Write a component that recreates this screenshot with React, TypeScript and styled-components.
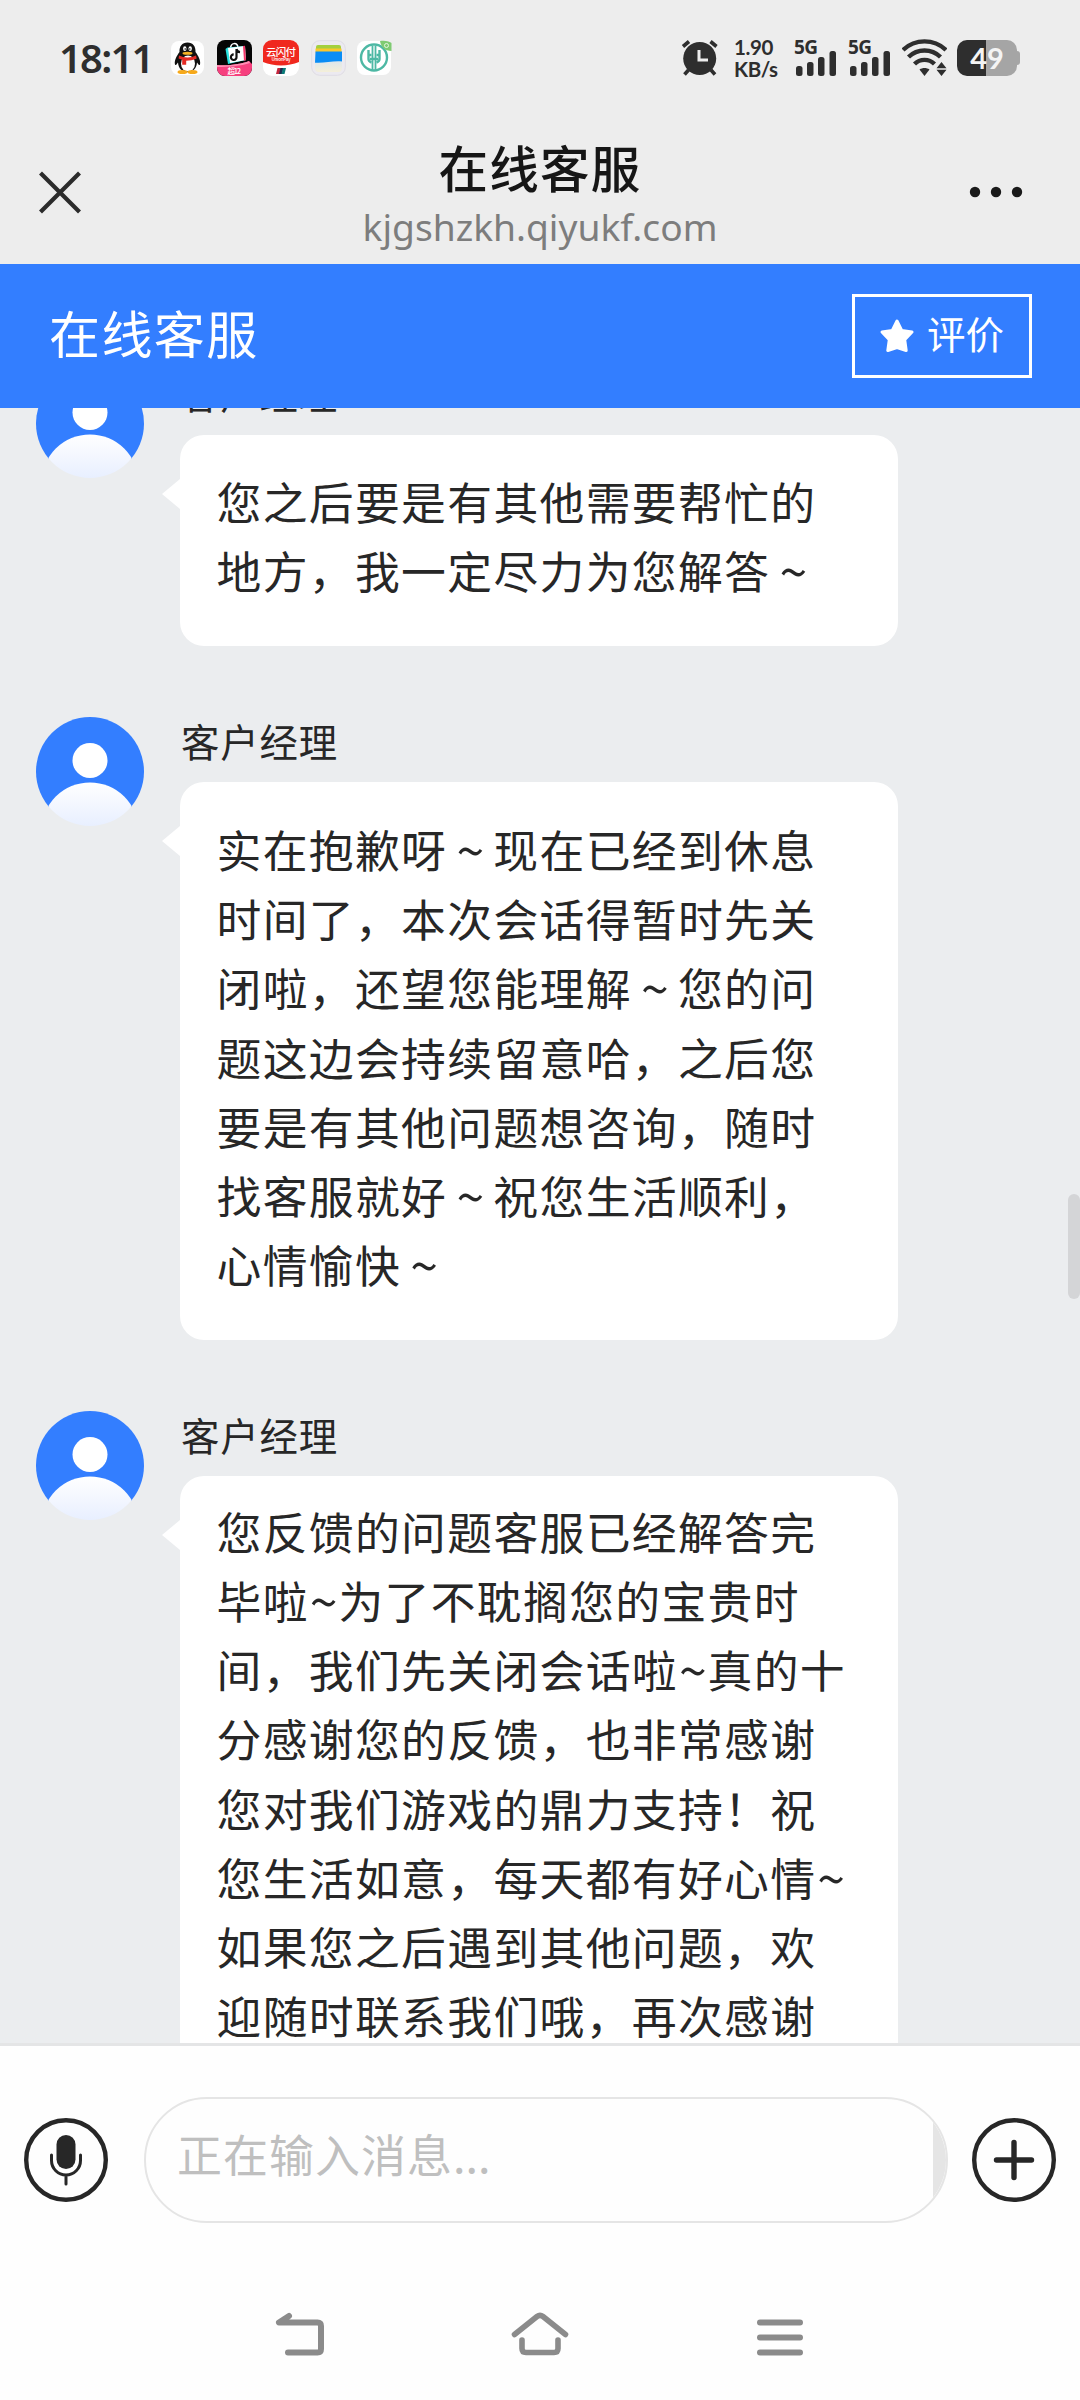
import React from 'react';
import styled, { createGlobalStyle } from 'styled-components';

const Global = createGlobalStyle`
  *, *::before, *::after { box-sizing: border-box; }
  html, body { margin: 0; padding: 0; background: #fff; }
`;

const cjk = `"Noto Sans CJK SC", "Noto Sans", sans-serif`;
const latin = `"Noto Sans", "Noto Sans CJK SC", sans-serif`;

const Screen = styled.div`
  width: 1080px;
  height: 2400px;
  display: flex;
  flex-direction: column;
  overflow: hidden;
  background: #fefefe;
  font-family: ${cjk};
  color: #272727;
`;

const StatusBar = styled.div`
  height: 116px;
  flex: none;
  display: flex;
  align-items: center;
  justify-content: space-between;
  padding: 0 63px 0 59px;
  background: #ededed;
  color: #2e2e2e;
`;

const StatusGroup = styled.div`
  display: flex;
  align-items: center;
`;

const Clock = styled.div`
  width: 111px;
  font: 600 40px/54px ${latin};
  letter-spacing: -1.8px;
  white-space: nowrap;
`;

const AppIcons = styled.div`
  display: flex;
  gap: 11.5px;
  svg { display: block; }
`;

const NetSpeed = styled.div`
  width: 50px;
  margin-left: 15px;
  font: 700 20.5px/22px Lato, ${latin};
  letter-spacing: -0.4px;
  white-space: nowrap;
`;

const Signal = styled.div<{ $gap: number }>`
  position: relative;
  width: 43px;
  height: 38px;
  margin-left: ${p => p.$gap}px;
  svg { display: block; }
`;

const SignalTag = styled.span`
  position: absolute;
  left: 0;
  top: 0;
  font: 700 19px/17px ${latin};
  letter-spacing: -0.5px;
`;

const Battery = styled.div`
  position: relative;
  width: 60px;
  height: 36px;
  margin-left: 10px;
  border-radius: 10px;
  display: flex;
  align-items: center;
  justify-content: center;
  background: linear-gradient(90deg, #2e2e2e 0 29px, #a5a5a5 29px);
  color: #f4f4f4;
  font: 700 29px/36px Lato, ${latin};
  &::after {
    content: '';
    position: absolute;
    right: -3px;
    top: 11px;
    width: 3px;
    height: 14px;
    border-radius: 0 3px 3px 0;
    background: #a5a5a5;
  }
`;

const TitleBar = styled.header`
  height: 148px;
  flex: none;
  display: grid;
  grid-template-columns: 120px 1fr 120px;
  background: #ededed;
`;

const TitleSlot = styled.div<{ $inset?: number }>`
  display: flex;
  justify-content: center;
  padding: 51px ${p => p.$inset ?? 0}px 0 0;
`;

const Titles = styled.div`
  display: flex;
  flex-direction: column;
  align-items: center;
  padding-top: 20px;
`;

const PageTitle = styled.h1`
  margin: 0;
  font: 500 49.5px/62px ${cjk};
  letter-spacing: 1.2px;
  color: #161616;
`;

const PageHost = styled.div`
  margin-top: 6px;
  font: 400 37.2px/46px ${latin};
  color: #7d7d7d;
`;

const ServiceBar = styled.div`
  height: 144px;
  flex: none;
  display: flex;
  align-items: center;
  justify-content: space-between;
  padding: 0 48px 0 49px;
  background: #337eff;
  color: #fff;
`;

const ServiceName = styled.div`
  padding-bottom: 9px;
  font-size: 51px;
  line-height: 72px;
  letter-spacing: 1.4px;
`;

const RateButton = styled.button`
  width: 180px;
  height: 84px;
  padding: 0;
  display: flex;
  align-items: center;
  justify-content: center;
  gap: 12px;
  border: 3px solid #fff;
  background: transparent;
  color: #fff;
  font: 400 38.5px/50px ${cjk};
`;

const RateText = styled.span`
  padding: 0 1px 8px 0;
`;

const ChatWrap = styled.main`
  position: relative;
  height: 1635px;
  flex: none;
  overflow: hidden;
  background: #ebedef;
`;

const ChatList = styled.div`
  margin-top: -39px;
  display: flex;
  flex-direction: column;
  gap: 71px;
`;

const Message = styled.section`
  display: flex;
  align-items: flex-start;
  gap: 36px;
  padding-left: 36px;
`;

const MessageBody = styled.div`
  width: 717.5px;
`;

const Sender = styled.div`
  height: 65.5px;
  padding-left: 1px;
  font-size: 38.4px;
  line-height: 46px;
  letter-spacing: 0.9px;
`;

const Bubble = styled.div<{ $top: number; $bottom: number }>`
  position: relative;
  padding: ${p => p.$top}px 0 ${p => p.$bottom}px 36.5px;
  border-radius: 24px;
  background: #fff;
  font-size: 44.8px;
  line-height: 69.2px;
  letter-spacing: 1.35px;
  &::before {
    content: '';
    position: absolute;
    left: -18px;
    top: 44px;
    border: solid transparent;
    border-width: 15.5px 18px 15.5px 0;
    border-right-color: #fff;
  }
`;

const Line = styled.div`
  white-space: nowrap;
`;

const Tilde = styled.span<{ $wide?: boolean }>`
  display: inline-block;
  width: ${p => (p.$wide ? 46.1 : 29.6)}px;
  height: 69.2px;
  vertical-align: top;
  font-size: 50px;
  letter-spacing: 0;
  text-align: center;
`;

const ScrollThumb = styled.div`
  position: absolute;
  right: 0;
  top: 786px;
  width: 12px;
  height: 105px;
  border-radius: 6px;
  background: #d4d5d7;
`;

const Composer = styled.footer`
  height: 231px;
  flex: none;
  display: flex;
  align-items: center;
  padding: 0 24px;
  border-top: 3px solid #e4e5e6;
  background: #fefefe;
`;

const RoundButton = styled.button`
  width: 84px;
  height: 84px;
  padding: 0;
  border: 0;
  background: none;
  svg { display: block; }
`;

const InputBox = styled.div`
  width: 804px;
  height: 126px;
  margin: 0 24px 0 36px;
  display: flex;
  justify-content: space-between;
  border: 2.5px solid #e5e5e5;
  border-radius: 63px;
  overflow: hidden;
`;

const Placeholder = styled.div`
  padding-left: 31px;
  font-size: 45px;
  line-height: 109px;
  letter-spacing: 1px;
  color: #bfbfbf;
`;

const Ellipsis = styled.span`
  letter-spacing: 0;
`;

const InputEdge = styled.div`
  width: 13px;
  background: #e5e5e5;
`;

const NavBar = styled.nav`
  flex: 1;
  display: flex;
  justify-content: space-between;
  padding: 34px 270px 0;
  svg { display: block; }
`;

const IconText = styled.text`
  font-family: ${cjk};
  font-weight: 500;
`;

const messages = [
  { top: 31.5, bottom: 41.5, lines: ['您之后要是有其他需要帮忙的', '地方，我一定尽力为您解答～'] },
  {
    top: 31.5,
    bottom: 41.5,
    lines: [
      '实在抱歉呀～现在已经到休息',
      '时间了，本次会话得暂时先关',
      '闭啦，还望您能理解～您的问',
      '题这边会持续留意哈，之后您',
      '要是有其他问题想咨询，随时',
      '找客服就好～祝您生活顺利，',
      '心情愉快～',
    ],
  },
  {
    top: 19.5,
    bottom: 40,
    lines: [
      '您反馈的问题客服已经解答完',
      '毕啦~为了不耽搁您的宝贵时',
      '间，我们先关闭会话啦~真的十',
      '分感谢您的反馈，也非常感谢',
      '您对我们游戏的鼎力支持！祝',
      '您生活如意，每天都有好心情~',
      '如果您之后遇到其他问题，欢',
      '迎随时联系我们哦，再次感谢',
    ],
  },
];

function ChatLine({ text }: { text: string }) {
  return (
    <Line>
      {text.split(/([~～])/).map((part, i) =>
        part === '~' || part === '～' ? (
          <Tilde key={i} $wide={part === '～'}>~</Tilde>
        ) : (
          part
        ),
      )}
    </Line>
  );
}

function Avatar({ id }: { id: string }) {
  return (
    <svg width="108" height="109" viewBox="0 0 108 109">
      <defs>
        <clipPath id={`clip${id}`}>
          <ellipse cx="54" cy="54.5" rx="54" ry="54.5" />
        </clipPath>
        <linearGradient id={`body${id}`} x1="0" y1="65" x2="0" y2="109" gradientUnits="userSpaceOnUse">
          <stop offset="0" stopColor="#fff" />
          <stop offset="1" stopColor="#e8efff" />
        </linearGradient>
      </defs>
      <g clipPath={`url(#clip${id})`}>
        <rect width="108" height="90" fill="#337eff" />
        <circle cx="54" cy="43.5" r="17.5" fill="#fff" />
        <circle cx="54" cy="113.8" r="48.4" fill={`url(#body${id})`} />
      </g>
    </svg>
  );
}

function QQIcon() {
  return (
    <svg width="35" height="36" viewBox="0 0 35 36">
      <rect x="1" y="1" width="33" height="34" rx="8" fill="#fff" />
      <path d="M17.500 2.500c-5.500 0-8.300 4-8 9.500-3 4-5.500 9-4.500 12.500.6 1.500 2-.5 3-2 .5 6 4 9.500 9.500 9.500s9-3.500 9.500-9.500c1 1.500 2.400 3.500 3 2 1-3.500-1.500-8.500-4.500-12.500.3-5.500-2.500-9.500-8-9.500z" fill="#111" />
      <ellipse cx="18" cy="23.500" rx="7" ry="8" fill="#fff" />
      <ellipse cx="14.800" cy="8.700" rx="1.700" ry="2.400" fill="#fff" />
      <ellipse cx="20.200" cy="8.700" rx="1.700" ry="2.400" fill="#fff" />
      <circle cx="15.200" cy="9" r=".8" fill="#111" />
      <circle cx="19.800" cy="9" r=".8" fill="#111" />
      <ellipse cx="17.500" cy="13.200" rx="5" ry="1.500" fill="#f6b325" />
      <path d="M9 15.500c5 2.600 12 2.600 17 0l.7 3c-3.500 1.800-7 2.200-10.500 2.200v4h-4v-5l-3.600-1.200z" fill="#e42a24" />
      <ellipse cx="12.500" cy="32" rx="5" ry="2" fill="#f6a91b" />
      <ellipse cx="22.500" cy="32" rx="5" ry="2" fill="#f6a91b" />
    </svg>
  );
}

function ShopIcon() {
  return (
    <svg width="35" height="36" viewBox="0 0 35 36">
      <defs><clipPath id="shop"><rect width="35" height="36" rx="8" /></clipPath></defs>
      <g clipPath="url(#shop)">
        <rect width="35" height="36" fill="#050505" />
        <path d="M13.500 9c0-7 7-7 7.500-1" fill="none" stroke="#fff" strokeWidth="1.500" />
        <path d="M8.500 9l2-1.500 17-1.500 1 14-17.500 4z" fill="#28e0dd" />
        <path d="M11 8l17-2 1 14-16 3z" fill="#fff" />
        <path d="M26 6l2-.3 1 14.500-2 .5z" fill="#f5386b" />
        <path d="M19.500 9v8a2.800 2.800 0 1 1-2.800-2.600M19.500 9c.4 2 1.800 3 3.500 3.200" fill="none" stroke="#111" strokeWidth="2.200" />
        <path d="M0 25c12 1 24-1 32-4l3 3v12H0z" fill="#f6407e" />
        <path d="M0 25c12 1 24-1 32-4l1 2c-9 3-22 4-33 4z" fill="#ff8fb4" />
        <IconText x="10.500" y="34" fontSize="7.500" fill="#fff" textLength="13.500">超12</IconText>
      </g>
    </svg>
  );
}

function UnionPayIcon() {
  return (
    <svg width="36" height="36" viewBox="0 0 36 36">
      <defs><clipPath id="union"><rect width="36" height="36" rx="9" /></clipPath></defs>
      <g clipPath="url(#union)">
        <rect width="36" height="36" fill="#fff" />
        <path d="M0 0h36v22c-11 4.500-25 4.500-36 0z" fill="#f0281f" />
        <IconText x="3" y="16" fontSize="10.500" fill="#fff" textLength="30">云闪付</IconText>
        <IconText x="8.500" y="21.200" fontSize="4.600" fill="#fff" textLength="19">UnionPay</IconText>
        <path d="M14.500 28h4l-1.500 6h-4z" fill="#c3283e" />
        <path d="M17.500 28h3l-1.500 6h-3z" fill="#1e2d50" />
        <path d="M20 28h3l-1.500 6h-3z" fill="#0a7a78" />
      </g>
    </svg>
  );
}

function WalletIcon() {
  return (
    <svg width="35" height="36" viewBox="0 0 35 36">
      <defs>
        <linearGradient id="wallet" x1="0" y1="0" x2="0" y2="1">
          <stop offset="0" stopColor="#dbe6ee" />
          <stop offset="1" stopColor="#f4efd9" />
        </linearGradient>
      </defs>
      <rect x=".7" y=".7" width="33.600" height="34.600" rx="8" fill="#eceaf0" stroke="#dfdce4" strokeWidth="1" />
      <rect x="4" y="20" width="27" height="12" rx="4" fill="url(#wallet)" />
      <path d="M5 7q0-2 2-2h21q2 0 2 2v3H5z" fill="#a4cf3f" />
      <path d="M4.500 8.500h26v4h-26z" fill="#fbc62c" />
      <path d="M4.500 11.500h26.500v10c-9-1-18 2-27 1.200z" fill="#0a8df5" />
    </svg>
  );
}

function BankIcon() {
  return (
    <svg width="35" height="36" viewBox="0 0 35 36">
      <rect x="0" y="1" width="34" height="34" rx="8" fill="#fff" />
      <circle cx="17" cy="17.500" r="13" fill="none" stroke="#4db8a4" strokeWidth="2.400" />
      <path d="M15.500 6v24M18.500 6v24" fill="none" stroke="#4db8a4" strokeWidth="1.800" />
      <path d="M11.500 10v9q0 2.500 3 3.500M22.500 10v9q0 2.500-3 3.500M11.500 15h3M19.500 15h3M13 19h8" fill="none" stroke="#4db8a4" strokeWidth="2.400" />
      <path d="M23 1c5-1 10 .5 11.500 2v8C28 11 24 7 23 1z" fill="#7fcb72" />
      <circle cx="29.500" cy="5.500" r="2" fill="none" stroke="#e4f5df" strokeWidth="1" />
    </svg>
  );
}

function AlarmIcon() {
  return (
    <svg width="38" height="38" viewBox="0 0 38 38">
      <circle cx="18.700" cy="19.500" r="16.500" fill="#2e2e2e" />
      <path d="M2 7.500L8 2.500M35.500 7.500L29.500 2.500" stroke="#2e2e2e" strokeWidth="3.600" />
      <path d="M7.500 31l-4 4.500M30 31l4 4.500" stroke="#2e2e2e" strokeWidth="3.600" />
      <path d="M18 11v10h9" fill="none" stroke="#ededed" strokeWidth="3" />
    </svg>
  );
}

function SignalIcon({ gap }: { gap: number }) {
  return (
    <Signal $gap={gap}>
      <SignalTag>5G</SignalTag>
      <svg width="43" height="38" viewBox="0 0 43 38" fill="#2e2e2e">
        <rect x="2" y="27" width="6.500" height="10" rx="2.500" />
        <rect x="13" y="23" width="6.500" height="14" rx="2.500" />
        <rect x="24" y="18" width="6.500" height="19" rx="2.500" />
        <rect x="35.500" y="12" width="6.500" height="25" rx="2.500" />
      </svg>
    </Signal>
  );
}

const WifiSvg = styled.svg`
  display: block;
  margin-left: 11px;
`;

function WifiIcon() {
  return (
    <WifiSvg width="45" height="38" viewBox="0 0 45 38">
      <g fill="none" stroke="#2e2e2e" strokeWidth="4.400">
        <path d="M1 11C13-.5 32-.5 44 11" />
        <path d="M6.500 18c9-8.700 23-8.700 32 0" />
        <path d="M12.500 25c5.500-5.500 14.500-5.500 20 0" />
      </g>
      <path d="M17.500 30.500c3-2 7-2 10 0l-5 6.500z" fill="#2e2e2e" />
      <path d="M39.500 23l5 6.200h-10zM39.500 37l5-6.200h-10z" fill="#2e2e2e" />
    </WifiSvg>
  );
}

export default function App() {
  return (
    <>
      <Global />
      <Screen>
        <StatusBar>
          <StatusGroup>
            <Clock>18:11</Clock>
            <AppIcons>
              <QQIcon />
              <ShopIcon />
              <UnionPayIcon />
              <WalletIcon />
              <BankIcon />
            </AppIcons>
          </StatusGroup>
          <StatusGroup>
            <AlarmIcon />
            <NetSpeed>1.90<br />KB/s</NetSpeed>
            <SignalIcon gap={10} />
            <SignalIcon gap={11} />
            <WifiIcon />
            <Battery>49</Battery>
          </StatusGroup>
        </StatusBar>

        <TitleBar>
          <TitleSlot>
            <svg width="50" height="50" viewBox="0 0 50 50">
              <path d="M5.500 6L44.500 45M44.500 6L5.500 45" stroke="#2b2b2b" strokeWidth="4.200" />
            </svg>
          </TitleSlot>
          <Titles>
            <PageTitle>在线客服</PageTitle>
            <PageHost>kjgshzkh.qiyukf.com</PageHost>
          </Titles>
          <TitleSlot $inset={48}>
            <svg width="72" height="50" viewBox="0 0 72 50" fill="#1a1a1a">
              <circle cx="15" cy="25" r="5.200" />
              <circle cx="36" cy="25" r="5.200" />
              <circle cx="57" cy="25" r="5.200" />
            </svg>
          </TitleSlot>
        </TitleBar>

        <ServiceBar>
          <ServiceName>在线客服</ServiceName>
          <RateButton>
            <svg width="36" height="36" viewBox="0 0 36 36">
              <path
                d="M18 3l4.700 9.400 10.300 1.600-7.300 7.600 1.500 10.900L18 29.500l-9.200 3 1.500-10.900L3 14l10.300-1.600z"
                fill="#fff" stroke="#fff" strokeWidth="3" strokeLinejoin="round"
              />
            </svg>
            <RateText>评价</RateText>
          </RateButton>
        </ServiceBar>

        <ChatWrap>
          <ChatList>
            {messages.map((m, i) => (
              <Message key={i}>
                <Avatar id={String(i)} />
                <MessageBody>
                  <Sender>客户经理</Sender>
                  <Bubble $top={m.top} $bottom={m.bottom}>
                    {m.lines.map(line => <ChatLine key={line} text={line} />)}
                  </Bubble>
                </MessageBody>
              </Message>
            ))}
          </ChatList>
          <ScrollThumb />
        </ChatWrap>

        <Composer>
          <RoundButton>
            <svg width="84" height="84" viewBox="0 0 84 84" fill="none" stroke="#272727">
              <circle cx="42" cy="42" r="39.800" strokeWidth="4.400" />
              <rect x="32.500" y="17" width="19" height="34" rx="9.500" fill="#272727" stroke="none" />
              <path d="M27.500 37v5.500a14.500 14.500 0 0 0 29 0V37M42 57v9" strokeWidth="3" strokeLinecap="round" />
            </svg>
          </RoundButton>
          <InputBox>
            <Placeholder>正在输入消息<Ellipsis>...</Ellipsis></Placeholder>
            <InputEdge />
          </InputBox>
          <RoundButton>
            <svg width="84" height="84" viewBox="0 0 84 84" fill="none" stroke="#272727">
              <circle cx="42" cy="42" r="39.800" strokeWidth="4.400" />
              <path d="M42 24.500v35M24.500 42h35" strokeWidth="5.400" strokeLinecap="round" />
            </svg>
          </RoundButton>
        </Composer>

        <NavBar>
          <svg width="60" height="54" viewBox="0 0 60 54" fill="none" stroke="#8b8b8b" strokeWidth="6" strokeLinecap="round" strokeLinejoin="round">
            <path d="M19 8L9 14.500h38.500q3.500 0 3.500 3.500v23q0 3.500-3.500 3.500H18" />
          </svg>
          <svg width="60" height="54" viewBox="0 0 60 54" fill="none" stroke="#8b8b8b" strokeWidth="5.600" strokeLinecap="round" strokeLinejoin="round">
            <path d="M4.500 26.500L27 8.500q3-2.400 6 0L55.500 26.500M12 32v8.500q0 4 4 4h28q4 0 4-4V32" />
          </svg>
          <svg width="60" height="54" viewBox="0 0 60 54" fill="none" stroke="#8b8b8b" strokeWidth="6" strokeLinecap="round">
            <path d="M10 14.500h40M10 29.500h40M10 44.500h40" />
          </svg>
        </NavBar>
      </Screen>
    </>
  );
}
